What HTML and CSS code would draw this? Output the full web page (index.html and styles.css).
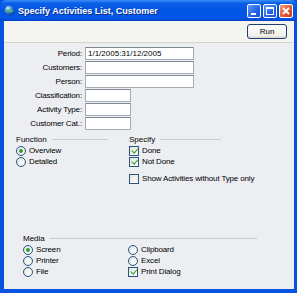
FILE: index.html
```html
<!DOCTYPE html>
<html lang="en">
<head>
    <meta charset="UTF-8">
    <meta name="viewport" content="width=device-width, initial-scale=1.0">
    <title>Specify Activities List, Customer</title>
    <link rel="stylesheet" href="styles.css">
</head>
<body>
    <div class="window">
        <div class="titlebar">
            <svg class="app-icon" width="11" height="11" viewBox="0 0 11 11">
                <defs>
                    <radialGradient id="globe" cx="35%" cy="30%" r="70%">
                        <stop offset="0" stop-color="#d8f0ff"/>
                        <stop offset="0.5" stop-color="#3c8ed8"/>
                        <stop offset="1" stop-color="#0b3f8c"/>
                    </radialGradient>
                </defs>
                <circle cx="5.5" cy="5.5" r="5" fill="url(#globe)"/>
                <path d="M2 6 Q4 4 6 6 T9 5" stroke="#5cbf5c" stroke-width="1.2" fill="none"/>
            </svg>
            <span class="title">Specify Activities List, Customer</span>
            <div class="title-buttons">
                <span class="tbtn">
                    <svg width="14" height="14" viewBox="0 0 14 14"><rect x="4" y="9" width="5" height="2" fill="#fff"/></svg>
                </span>
                <span class="tbtn">
                    <svg width="14" height="14" viewBox="0 0 14 14"><rect x="3.5" y="3.5" width="7" height="7" fill="none" stroke="#fff" stroke-width="1"/><rect x="3" y="3" width="8" height="2" fill="#fff"/></svg>
                </span>
                <span class="tbtn close">
                    <svg width="14" height="14" viewBox="0 0 14 14"><path d="M4 4 L10 10 M10 4 L4 10" stroke="#fff" stroke-width="1.8"/></svg>
                </span>
            </div>
        </div>

        <div class="frame">
            <div class="toolbar">
                <button class="run">Run</button>
            </div>

            <div class="content">
                <div class="fields">
                    <label>Period:</label>
                    <div class="input wide">1/1/2005:31/12/2005</div>
                    <label>Customers:</label>
                    <div class="input wide"></div>
                    <label>Person:</label>
                    <div class="input wide"></div>
                    <label>Classification:</label>
                    <div class="input short"></div>
                    <label>Activity Type:</label>
                    <div class="input short"></div>
                    <label>Customer Cat.:</label>
                    <div class="input short"></div>
                </div>

                <div class="groups">
                    <div class="group function">
                        <div class="heading"><span>Function</span></div>
                        <div class="option"><span class="radio on"></span>Overview</div>
                        <div class="option"><span class="radio"></span>Detailed</div>
                    </div>
                    <div class="group specify">
                        <div class="heading"><span>Specify</span></div>
                        <div class="option"><span class="check on"></span>Done</div>
                        <div class="option"><span class="check on"></span>Not Done</div>
                        <div class="option spaced"><span class="check"></span>Show Activities without Type only</div>
                    </div>
                </div>

                <div class="group media">
                    <div class="heading"><span>Media</span></div>
                    <div class="media-grid">
                        <div class="option"><span class="radio on"></span>Screen</div>
                        <div class="option"><span class="radio"></span>Clipboard</div>
                        <div class="option"><span class="radio"></span>Printer</div>
                        <div class="option"><span class="radio"></span>Excel</div>
                        <div class="option"><span class="radio"></span>File</div>
                        <div class="option"><span class="check on"></span>Print Dialog</div>
                    </div>
                </div>
            </div>
        </div>
    </div>
</body>
</html>
```

FILE: styles.css
```css
* {
    box-sizing: border-box;
}
body {
    margin: 0;
    width: 297px;
    height: 293px;
    overflow: hidden;
    font-family: "Liberation Sans", Arial, sans-serif;
    font-size: 8px;
    color: #000;
}
.window {
    width: 297px;
    height: 293px;
    display: flex;
    flex-direction: column;
    background: #0553e0;
}

/* title bar */
.titlebar {
    height: 21px;
    flex: none;
    display: flex;
    align-items: center;
    padding: 0 4px 0 4px;
    background: linear-gradient(#3c8ef8 0%, #0a5fe6 15%, #0255e3 50%, #0557ea 85%, #0043c8 100%);
    border-radius: 6px 6px 0 0;
}
.app-icon {
    flex: none;
}
.title {
    margin-left: 3px;
    color: #fff;
    font-weight: bold;
    font-size: 9px;
    text-shadow: 1px 1px 0 #0a2f8a;
    white-space: nowrap;
}
.title-buttons {
    margin-left: auto;
    display: flex;
    gap: 2px;
}
.tbtn {
    width: 14px;
    height: 14px;
    border: 1px solid #fff;
    border-radius: 2px;
    background: linear-gradient(135deg, #5d9cfc, #2463e6 60%, #1a52d0);
    display: flex;
    align-items: center;
    justify-content: center;
}
.tbtn svg {
    margin: -1px;
}
.tbtn.close {
    background: linear-gradient(135deg, #f29a7a, #e0522a 60%, #c8401c);
}

/* window body */
.frame {
    flex: 1;
    margin: 0 3px 4px 4px;
    display: flex;
    flex-direction: column;
    background: #eceef2;
}
.toolbar {
    height: 22px;
    flex: none;
    display: flex;
    justify-content: flex-end;
    align-items: flex-start;
    padding: 3px 7px 0 0;
    background: #f4f4f1;
    border-bottom: 1px solid #d4d4cf;
}
.run {
    width: 40px;
    height: 15px;
    padding: 0;
    font-family: inherit;
    font-size: 8px;
    color: #000;
    border: 1px solid #1f3f73;
    border-radius: 3px;
    background: linear-gradient(#ffffff, #f0f0ea 80%, #d8d8d0);
}

.content {
    flex: 1;
    padding: 4px 0 0 0;
}

/* parameter fields */
.fields {
    display: grid;
    grid-template-columns: 78px auto;
    column-gap: 3px;
    row-gap: 1px;
    align-items: center;
}
.fields label {
    text-align: right;
    white-space: nowrap;
    letter-spacing: -0.15px;
}
.input {
    height: 13px;
    background: #fff;
    border: 1px solid #a5acb5;
    border-top-color: #7f8790;
    padding: 0 2px;
    line-height: 11px;
    white-space: nowrap;
}
.input.wide {
    width: 109px;
}
.input.short {
    width: 46px;
}

/* option groups */
.groups {
    display: flex;
    margin-top: 4px;
    padding-left: 12px;
}
.group.function {
    width: 92px;
}
.group.specify {
    margin-left: 21px;
    width: 92px;
}
.heading {
    height: 11px;
    display: flex;
    align-items: center;
    gap: 5px;
}
.heading::after {
    content: "";
    flex: 1;
    height: 1px;
    background: #c9ccd2;
}
.option {
    height: 11px;
    display: flex;
    align-items: center;
    gap: 3px;
    white-space: nowrap;
    letter-spacing: -0.15px;
}
.option.spaced {
    margin-top: 6px;
}
.radio {
    width: 10px;
    height: 10px;
    flex: none;
    border: 1px solid #2a5582;
    border-radius: 50%;
    background: radial-gradient(circle at 60% 60%, #ffffff, #dcdcd6);
    display: flex;
    align-items: center;
    justify-content: center;
}
.radio.on::after {
    content: "";
    width: 4px;
    height: 4px;
    border-radius: 50%;
    background: #2fa02f;
}
.check {
    width: 10px;
    height: 10px;
    flex: none;
    border: 1px solid #2a5582;
    background: linear-gradient(135deg, #e4e4de, #ffffff);
    position: relative;
}
.check.on::after {
    content: "";
    position: absolute;
    left: 2.5px;
    top: 0.5px;
    width: 2.5px;
    height: 4.5px;
    border: solid #22a022;
    border-width: 0 1.5px 1.5px 0;
    transform: rotate(40deg);
}

.group.media {
    margin: 49px 37px 0 19px;
}
.media-grid {
    display: grid;
    grid-template-columns: 105px auto;
}
```
